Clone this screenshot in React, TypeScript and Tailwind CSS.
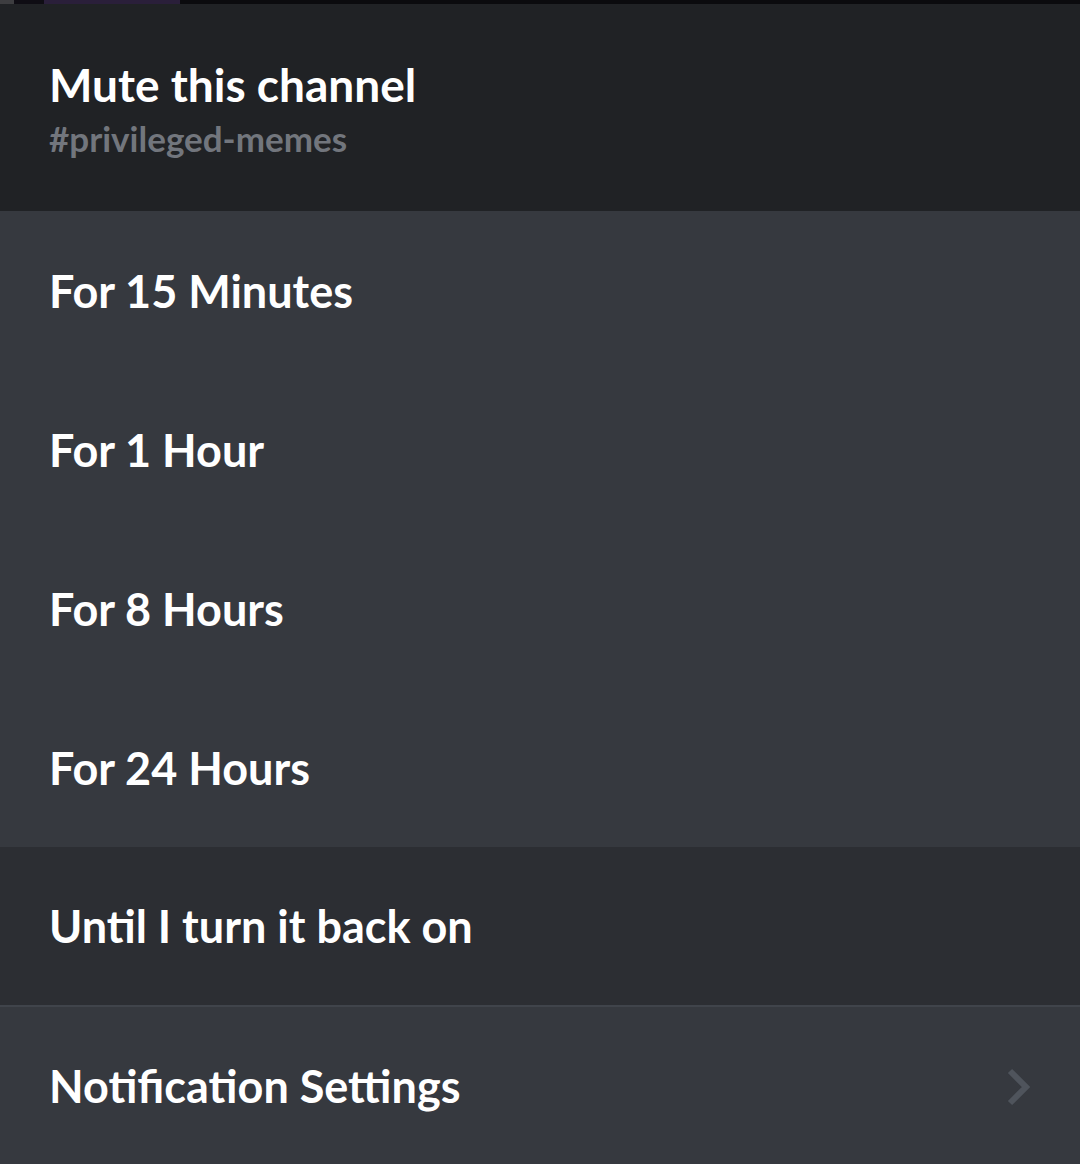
import React from 'react';

const options = ['For 15 Minutes', 'For 1 Hour', 'For 8 Hours', 'For 24 Hours'];

const Chevron = () => (
    <svg width="26" height="38" viewBox="0 0 26 38" fill="none" className="shrink-0">
        <path d="M4 3 L20 19 L4 35" stroke="#4f545c" strokeWidth="6" />
    </svg>
);

export default function App() {
    return (
        <div className="w-[1080px] h-[1164px] flex flex-col bg-[#36393f] overflow-hidden" style={{ fontFamily: 'Lato, "Noto Sans", sans-serif' }}>
            {/* strip of the channel banner behind the sheet */}
            <div className="h-[4px] flex shrink-0 bg-[#0b0b0e]">
                <div className="w-[14px] bg-[#3d3d40]" />
                <div className="w-[30px] bg-[#0f0d14]" />
                <div className="w-[136px] bg-[#2a1f3a]" />
            </div>

            <div className="h-[207px] shrink-0 bg-[#202225] px-[49px] pt-[54px]">
                <h2 className="text-[46px] leading-[54px] font-bold text-white">Mute this channel</h2>
                <p className="text-[35px] leading-[40px] font-bold text-[#72767d] mt-[6px]">#privileged-memes</p>
            </div>

            {options.map(label => (
                <div key={label} className="h-[159px] shrink-0 flex items-center px-[49px] pt-[2px]">
                    <span className="text-[45px] font-bold text-white">{label}</span>
                </div>
            ))}

            <div className="h-[158px] shrink-0 flex items-center px-[49px] pt-[2px] bg-[#2c2e33]">
                <span className="text-[45px] font-bold text-white">Until I turn it back on</span>
            </div>
            <div className="h-[2px] shrink-0 bg-[#40444b]" />

            <div className="flex-1 flex items-center justify-between pl-[49px] pr-[48px] pt-[2px]">
                <span className="text-[45px] font-bold text-white">Notification Settings</span>
                <Chevron />
            </div>
        </div>
    );
}
